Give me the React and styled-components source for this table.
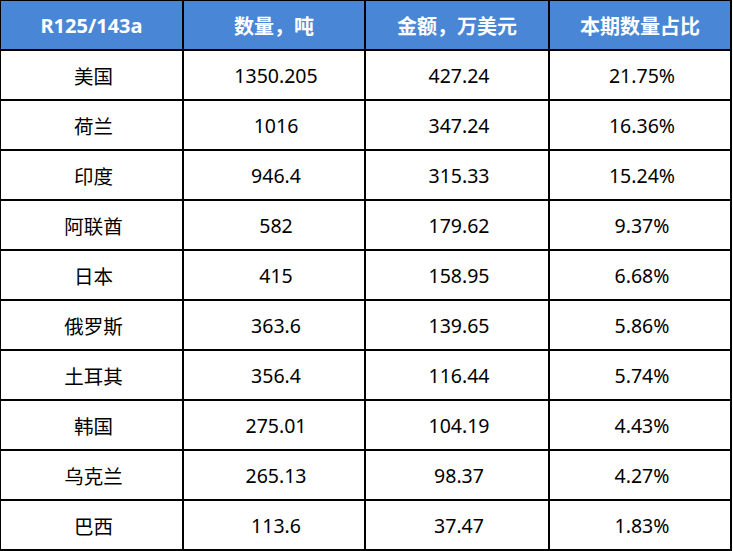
import styled, { createGlobalStyle } from "styled-components"

const GlobalStyle = createGlobalStyle`
  html, body {
    margin: 0;
    padding: 0;
    background: #ffffff;
  }
  body {
    font-family: "Noto Sans", "Noto Sans CJK SC", sans-serif;
  }
`

const Table = styled.div`
  width: 733px;
  height: 551px;
  background: #ffffff;
`

// black background shows through the gaps as the cell borders
const Grid = styled.div`
  display: grid;
  grid-template-columns: 181px 180px 182px 180px;
  grid-template-rows: repeat(11, 48px);
  gap: 2px;
  width: 732px;
  box-sizing: border-box;
  padding: 1px 2px 2px 1px;
  background: #000000;
`

const Cell = styled.div`
  display: flex;
  align-items: center;
  justify-content: center;
  padding-left: ${(p) => (p.$head ? "0" : "4px")};
  background: ${(p) => (p.$head ? "#4a86d6" : "#ffffff")};
  color: ${(p) => (p.$head ? "#ffffff" : "#000000")};
  font-size: ${(p) => (p.$head ? "20px" : "19.5px")};
  font-weight: ${(p) => (p.$head ? 700 : 400)};
`

const head = ["R125/143a", "数量，吨", "金额，万美元", "本期数量占比"]

const rows = [
  ["美国", "1350.205", "427.24", "21.75%"],
  ["荷兰", "1016", "347.24", "16.36%"],
  ["印度", "946.4", "315.33", "15.24%"],
  ["阿联酋", "582", "179.62", "9.37%"],
  ["日本", "415", "158.95", "6.68%"],
  ["俄罗斯", "363.6", "139.65", "5.86%"],
  ["土耳其", "356.4", "116.44", "5.74%"],
  ["韩国", "275.01", "104.19", "4.43%"],
  ["乌克兰", "265.13", "98.37", "4.27%"],
  ["巴西", "113.6", "37.47", "1.83%"],
]

export default function App() {
  return (
    <>
      <GlobalStyle />
      <Table>
        <Grid>
          {head.map((h) => (
            <Cell $head key={h}>{h}</Cell>
          ))}
          {rows.map((r) =>
            r.map((v, i) => <Cell key={r[0] + i}>{v}</Cell>)
          )}
        </Grid>
      </Table>
    </>
  )
}
